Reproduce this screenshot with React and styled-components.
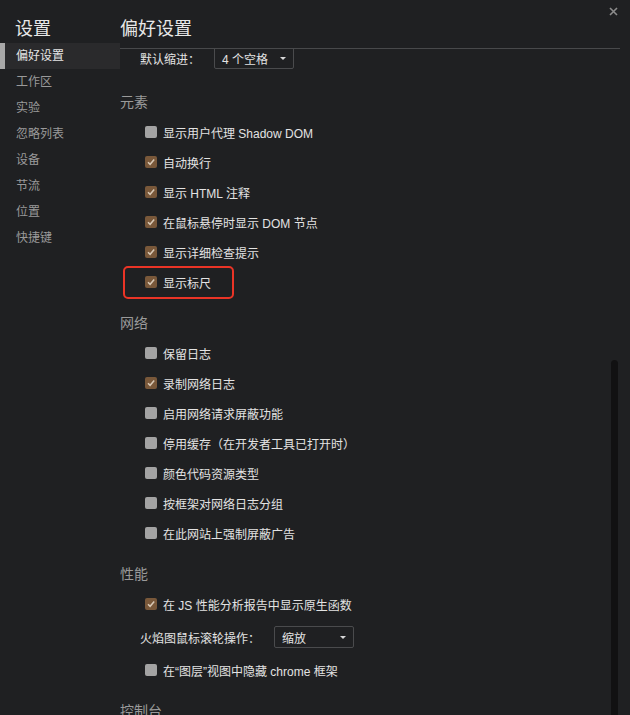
import React from "react";
import styled, { createGlobalStyle } from "styled-components";

const Global = createGlobalStyle`
  html, body { margin: 0; padding: 0; background: #1f2022; }
  body { font-family: "Liberation Sans", "Noto Sans CJK SC", sans-serif; }
  * { box-sizing: border-box; }
`;

const Page = styled.div`
  position: relative;
  display: flex;
  width: 630px;
  height: 715px;
  overflow: hidden;
  background: #1f2022;
  color: #e3e3e3;
`;

const Sidebar = styled.nav`
  width: 120px;
  flex: none;
  display: flex;
  flex-direction: column;
  padding-top: 17px;
`;

const SideTitle = styled.div`
  font-size: 18px;
  line-height: 24px;
  height: 26px;
  padding-left: 15px;
  color: #e8e8e8;
`;

const SideItem = styled.div`
  position: relative;
  height: 26px;
  line-height: 26px;
  font-size: 12px;
  padding-left: 16px;
  color: ${(p) => (p.$active ? "#e6e6e6" : "#9a9a9a")};
  background: ${(p) => (p.$active ? "#2a2a2c" : "transparent")};
  &::before {
    content: "";
    display: ${(p) => (p.$active ? "block" : "none")};
    position: absolute;
    left: 0;
    top: 0;
    width: 5px;
    height: 26px;
    background: #a8a8a8;
  }
`;

const Main = styled.main`
  position: relative;
  flex: 1;
  margin-right: 10px;
  display: flex;
  flex-direction: column;
  min-width: 0;
`;

const Header = styled.header`
  height: 49px;
  flex: none;
  padding-top: 17px;
  border-bottom: 1px solid #48494b;
  font-size: 18px;
  line-height: 24px;
  color: #e8e8e8;
`;

const Scroller = styled.div`
  flex: 1;
  overflow: hidden;
  position: relative;
`;

const Content = styled.div`
  margin-top: -9px;
`;

const Section = styled.section`
  display: flex;
  flex-direction: column;
`;

const Heading = styled.h2`
  margin: 18px 0 7px;
  font-size: 14px;
  line-height: 16px;
  height: 16px;
  font-weight: normal;
  color: #9a9a9a;
`;

const Row = styled.label`
  position: relative;
  display: flex;
  align-items: center;
  height: 30px;
  padding-left: 25px;
  font-size: 12px;
  color: #e3e3e3;
`;

const Box = styled.span`
  width: 12px;
  height: 12px;
  border-radius: 2px;
  margin-right: 6px;
  flex: none;
  display: flex;
  align-items: center;
  justify-content: center;
  background: ${(p) => (p.$checked ? "#79583a" : "#a3a3a3")};
`;

const Highlight = styled.span`
  position: absolute;
  left: 3px;
  top: -1px;
  width: 111px;
  height: 33px;
  border: 2px solid #ea3426;
  border-radius: 5px;
  pointer-events: none;
`;

const SelectRow = styled.div`
  display: flex;
  align-items: center;
  height: 22px;
  margin: 7px 0;
  padding-left: 20px;
  font-size: 12px;
  color: #e3e3e3;
`;

const SelectLabel = styled.span`
  margin-right: 14px;
`;

const Select = styled.div`
  width: 80px;
  height: 22px;
  border: 1px solid #4a4b4d;
  border-radius: 2px;
  display: flex;
  align-items: center;
  justify-content: space-between;
  padding: 0 7px 0 7px;
  font-size: 12px;
  color: #e3e3e3;
`;

const Caret = styled.span`
  width: 0;
  height: 0;
  border-left: 3.5px solid transparent;
  border-right: 3.5px solid transparent;
  border-top: 3.5px solid #d8d8d8;
`;

const ScrollThumb = styled.div`
  position: absolute;
  right: 2px;
  top: 311px;
  width: 7px;
  height: 420px;
  border-radius: 4px;
  background: #111112;
`;

const Close = styled.button`
  position: absolute;
  top: 6px;
  right: 12px;
  width: 10px;
  height: 10px;
  padding: 0;
  border: 0;
  background: none;
  display: flex;
  align-items: center;
  justify-content: center;
`;

const Check = () => (
  <svg width="10" height="10" viewBox="0 0 10 10">
    <path d="M2 5.2 L4.1 7.3 L8.2 2.6" fill="none" stroke="#d9c9b6" strokeWidth="1.5" />
  </svg>
);

const CheckRow = ({ checked, children, highlight }) => (
  <Row>
    <Box $checked={checked}>{checked && <Check />}</Box>
    {children}
    {highlight && <Highlight />}
  </Row>
);

const SelectField = ({ label, value }) => (
  <SelectRow>
    <SelectLabel>{label}</SelectLabel>
    <Select>
      <span>{value}</span>
      <Caret />
    </Select>
  </SelectRow>
);

const nav = ["偏好设置", "工作区", "实验", "忽略列表", "设备", "节流", "位置", "快捷键"];

export default function App() {
  return (
    <Page>
      <Global />
      <Sidebar>
        <SideTitle>设置</SideTitle>
        {nav.map((n, i) => (
          <SideItem key={n} $active={i === 0}>
            {n}
          </SideItem>
        ))}
      </Sidebar>
      <Main>
        <Header>偏好设置</Header>
        <Scroller>
          <Content>
            <SelectField label="默认缩进：" value="4 个空格" />
            <Section>
              <Heading>元素</Heading>
              <CheckRow>显示用户代理 Shadow DOM</CheckRow>
              <CheckRow checked>自动换行</CheckRow>
              <CheckRow checked>显示 HTML 注释</CheckRow>
              <CheckRow checked>在鼠标悬停时显示 DOM 节点</CheckRow>
              <CheckRow checked>显示详细检查提示</CheckRow>
              <CheckRow checked highlight>显示标尺</CheckRow>
            </Section>
            <Section>
              <Heading>网络</Heading>
              <CheckRow>保留日志</CheckRow>
              <CheckRow checked>录制网络日志</CheckRow>
              <CheckRow>启用网络请求屏蔽功能</CheckRow>
              <CheckRow>停用缓存（在开发者工具已打开时）</CheckRow>
              <CheckRow>颜色代码资源类型</CheckRow>
              <CheckRow>按框架对网络日志分组</CheckRow>
              <CheckRow>在此网站上强制屏蔽广告</CheckRow>
            </Section>
            <Section>
              <Heading>性能</Heading>
              <CheckRow checked>在 JS 性能分析报告中显示原生函数</CheckRow>
              <SelectField label="火焰图鼠标滚轮操作：" value="缩放" />
              <CheckRow>在“图层”视图中隐藏 chrome 框架</CheckRow>
            </Section>
            <Section>
              <Heading>控制台</Heading>
            </Section>
          </Content>
          <ScrollThumb />
        </Scroller>
      </Main>
      <Close aria-label="关闭">
        <svg width="9" height="9" viewBox="0 0 9 9">
          <path d="M1 1 L8 8 M8 1 L1 8" stroke="#8c8c8c" strokeWidth="1.6" />
        </svg>
      </Close>
    </Page>
  );
}
